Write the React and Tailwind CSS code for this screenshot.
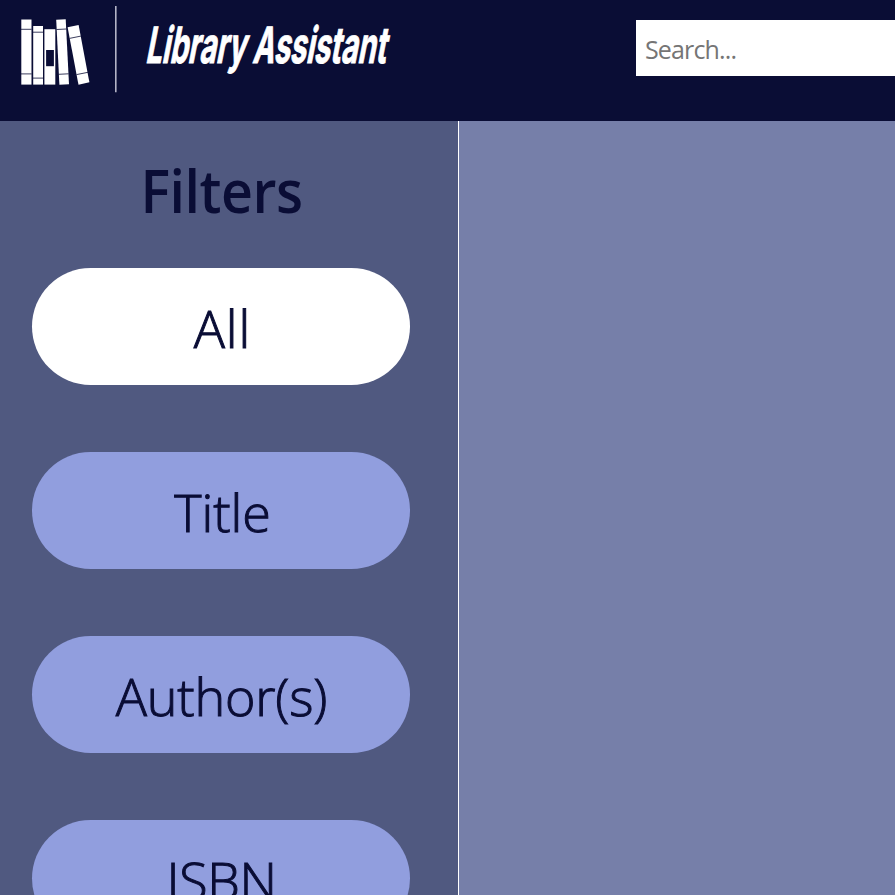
const filters = [
  { label: "All", active: true, text: "tracking-[1px] pl-[3px]" },
  { label: "Title", active: false, text: "tracking-[0px] pl-[3px]" },
  { label: "Author(s)", active: false, text: "tracking-[-0.2px] pl-px" },
  { label: "ISBN", active: false, text: "tracking-[-0.4px] pl-px" },
];

function Logo() {
  return (
    <svg width="420" height="100" viewBox="0 0 420 100" role="img" aria-label="Library Assistant">
      <g fill="#fff">
        <path d="M21.3 19.5H31.5V84.6H21.3Z" />
        <path d="M33.2 26H43V84.6H33.2Z" />
        <path d="M44.4 29.2H55.3V84.6H44.4Z" />
        <path d="M56.2 19.7L65.7 19.3L69 84.2L59.4 84.7Z" />
        <path d="M67.6 27.3L78.6 25L89.4 82.3L78.5 84.7Z" />
      </g>
      <path d="M46.1 50H53.9V66.2H46.1Z" fill="#0a0d35" />
      <g stroke="#0a0d35" strokeWidth="0.8">
        <path d="M21 29.3H31.6M21 73.9H31.6M33 32.2H43.2M33 78.1H43.2" />
        <path d="M56.5 29.5L66.3 29M58.6 74.3L68.7 73.8M69.5 38.4L80.9 36.1M76.5 74.6L88 72.3" />
      </g>
      <path d="M115.8 6V92.3" stroke="#b3b3c6" strokeWidth="1.6" />
      <text
        transform="translate(145 62.5) skewX(-11)"
        fontFamily="Inter, sans-serif"
        fontSize="50"
        fontWeight="700"
        fill="#fff"
        stroke="#fff"
        strokeWidth="1"
        textLength="240.5"
        lengthAdjust="spacingAndGlyphs"
      >
        Library Assistant
      </text>
    </svg>
  );
}

export default function App() {
  return (
    <div className="flex h-screen w-full flex-col overflow-hidden bg-[#767fa9] font-['Open_Sans',sans-serif] text-[#0a0d35]">
      <header className="flex h-[121px] shrink-0 items-start justify-between bg-[#0a0d35]">
        <Logo />
        <input
          type="text"
          placeholder="Search..."
          className="mt-5 h-14 w-[259px] bg-white px-[9px] pt-0.5 text-[25px] tracking-[-0.85px] outline-none placeholder:text-[#757575]"
        />
      </header>
      <div className="flex min-h-0 flex-1">
        <aside className="flex w-[459px] shrink-0 flex-col overflow-hidden border-r border-white bg-[#505980] pr-12 pl-8">
          <h1 className="mt-[29px] h-[118px] shrink-0 scale-x-[0.94] pl-px text-center text-[59px] leading-[80px] font-semibold tracking-[-0.5px]">
            Filters
          </h1>
          <nav className="flex flex-col gap-[67px]">
            {filters.map((f) => (
              <button
                key={f.label}
                className={`h-[117px] shrink-0 rounded-full pt-[3px] text-[52px] leading-none font-light [-webkit-text-stroke:1px_#0a0d35] ${f.text} ${f.active ? "bg-white" : "bg-[#919ede]"}`}
              >
                {f.label}
              </button>
            ))}
          </nav>
        </aside>
        <main className="flex-1" />
      </div>
    </div>
  );
}
